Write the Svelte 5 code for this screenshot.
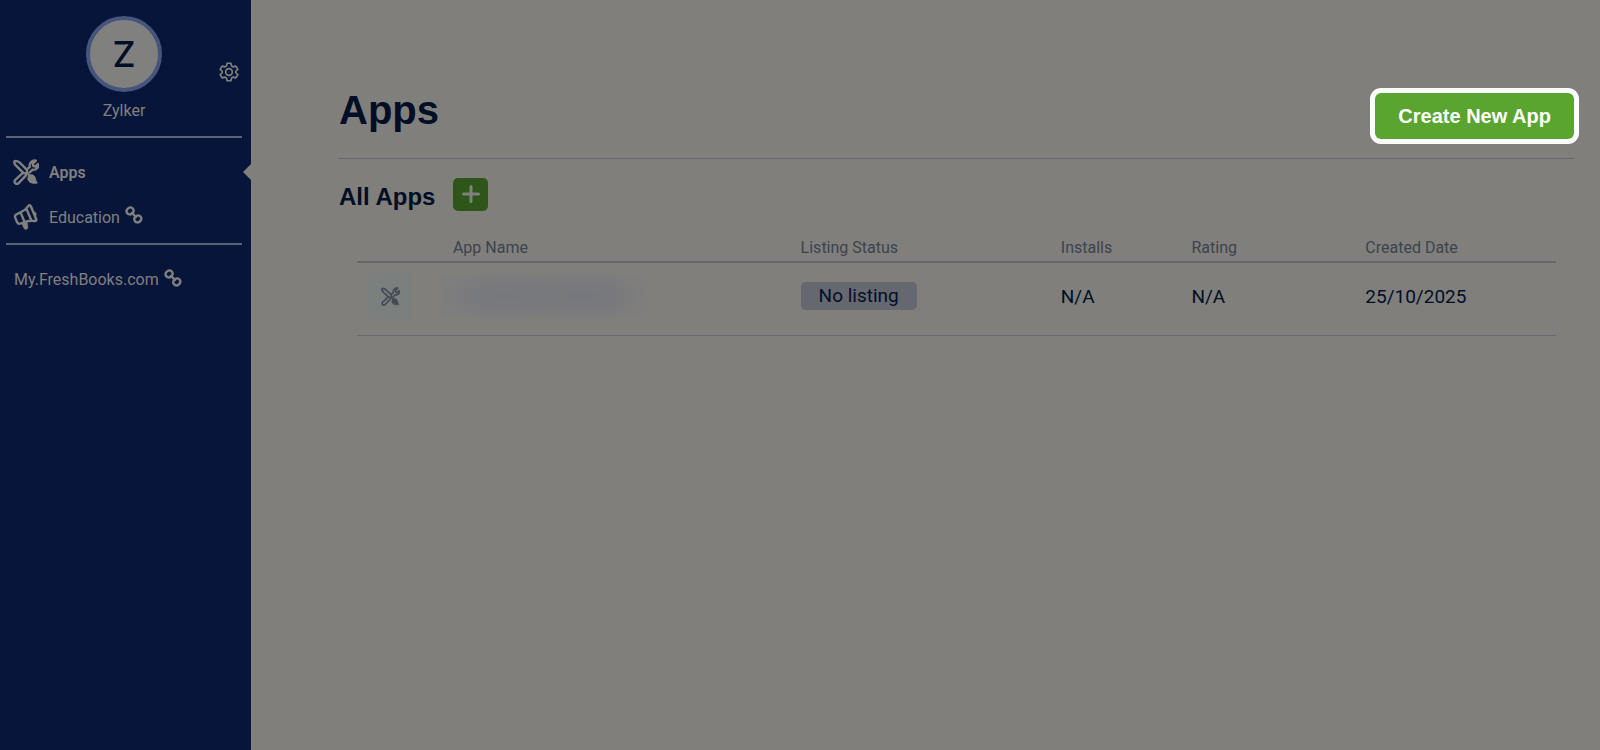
<script lang="ts">
  type App = {
    id: number;
    status: string;
    installs: string;
    rating: string;
    created: string;
  };

  const company = 'Zylker';

  let apps: App[] = $state([
    { id: 1, status: 'No listing', installs: 'N/A', rating: 'N/A', created: '25/10/2025' },
  ]);
</script>

{#snippet toolsIcon()}
  <svg class="tools" viewBox="0 0 26 26" aria-hidden="true">
    <path d="M10.5 14.2 2.6 6.2C1.2 4.600 1 2.600 1.600 2.200s3.400-.4 5.400 1.600l6 6c1.200 1.300 1.300 2.800 1.300 4.200z" />
    <path d="M14.300 14 17.200 16.800" />
    <path d="M10 13.600 2.300 20.800c-2.300 2.300 1 5.600 3.300 3.300l7.600-8M14.200 10.200l2.600-2.400c-.8-3.600 2.200-7 6-6.200l-3 3.200.5 2.200 2.300.5 2.300-2.300c.8 3.400-1.900 6.300-5.500 5.600L17 13.100" />
    <path class="fill" d="M15.800 17c1.500-1.600 4-1.500 5.300-.1 1.800 1.800 1 4.600 3.300 7.100-3.200.6-6.400.4-8.400-1.600-1.600-1.600-1.500-4-.2-5.400z" />
  </svg>
{/snippet}

{#snippet linkIcon()}
  <svg class="link-icon" viewBox="0 0 18 18" aria-hidden="true">
    <rect x="1.500" y="1.700" width="7.200" height="6.400" rx="3" transform="rotate(-40 5.100 4.900)" />
    <rect x="9.200" y="9.700" width="7.200" height="6.400" rx="3" transform="rotate(-40 12.800 12.900)" />
    <path d="m7 6.900 4 4.100" />
  </svg>
{/snippet}

<div class="layout">
  <aside class="sidebar">
    <header class="account">
      <div class="avatar">{company[0]}</div>
      <div class="company">{company}</div>
      <button class="settings" aria-label="Settings">
        <svg viewBox="0 0 24 24" aria-hidden="true">
          <circle cx="12" cy="12" r="4" />
          <path d="M9.700 1.500h4.600l.8 3.200 2 1.200 3.200-1 2.300 4-2.400 2.200v1.800l2.400 2.200-2.300 4-3.200-1-2 1.200-.8 3.200H9.700l-.8-3.200-2-1.200-3.200 1-2.300-4 2.400-2.200v-1.800L1.400 8.900l2.300-4 3.200 1 2-1.200z" />
        </svg>
      </button>
    </header>

    <nav class="menu">
      <a class="item active" href="#apps">
        {@render toolsIcon()}
        <span>Apps</span>
      </a>
      <a class="item" href="#education">
        <svg class="megaphone" viewBox="0 0 26 26" aria-hidden="true">
          <path d="M3.200 10.500 8 8.200c3-1.500 5.500-3.400 7.500-6.400.5-.8 1.800-.6 2.200.2l5.600 13.300c.4.900-.3 1.800-1.300 1.700-3.600-.6-7-.2-10.200 1l-4 1.500c-1.600.6-3.100 0-3.800-1.600l-1.700-4c-.6-1.500-.2-2.800.9-3.400zM7.600 8.600l4 9.400M13.500 5l5 11.700M20.500 8.800c1.800.2 2.400 1.600 1.300 2.900" />
          <path class="fill" d="m9.300 19.200 4.400-1.500 1 5.100c.6 2.600-3 3.400-3.800 1.200z" />
        </svg>
        <span>Education</span>
        {@render linkIcon()}
      </a>
    </nav>

    <a class="external" href="#my">
      <span>My.FreshBooks.com</span>
      {@render linkIcon()}
    </a>
  </aside>

  <main class="content">
    <header class="page-head">
      <h1>Apps</h1>
      <button class="create">Create New App</button>
    </header>

    <div class="section-head">
      <h2>All Apps</h2>
      <button class="add" aria-label="Add app">
        <svg viewBox="0 0 18 18" aria-hidden="true"><path d="M9 1.500v15M1.500 9h15" /></svg>
      </button>
    </div>

    <div class="table-wrap">
      <table>
        <colgroup>
          <col class="c-icon" />
          <col class="c-name" />
          <col class="c-status" />
          <col class="c-installs" />
          <col class="c-rating" />
          <col />
        </colgroup>
        <thead>
          <tr>
            <th></th>
            <th>App Name</th>
            <th>Listing Status</th>
            <th>Installs</th>
            <th>Rating</th>
            <th>Created Date</th>
          </tr>
        </thead>
        <tbody>
          {#each apps as app (app.id)}
            <tr>
              <td><div class="app-icon">{@render toolsIcon()}</div></td>
              <td><div class="redacted"></div></td>
              <td><span class="badge">{app.status}</span></td>
              <td>{app.installs}</td>
              <td>{app.rating}</td>
              <td>{app.created}</td>
            </tr>
          {/each}
        </tbody>
      </table>
    </div>
  </main>
</div>

<style>
  :global(body) {
    margin: 0;
    background: #807f7c;
  }
  .layout {
    display: flex;
    min-height: 100vh;
    font-family: 'Roboto', 'Noto Sans', sans-serif;
    font-size: 16px;
    color: #020e26;
  }
  button {
    border: none;
    padding: 0;
    cursor: pointer;
  }
  svg {
    flex: none;
    fill: none;
    stroke: currentColor;
    stroke-width: 2;
    stroke-linecap: round;
    stroke-linejoin: round;
  }
  .tools,
  .megaphone,
  .link-icon {
    stroke-width: 2.4;
  }
  .fill {
    fill: currentColor;
    stroke-width: 1;
  }

  .sidebar {
    box-sizing: border-box;
    flex: none;
    width: 251px;
    padding: 16px 9px 0 6px;
    background: #07153a;
    color: #80807f;
  }
  .account {
    position: relative;
    display: flex;
    flex-direction: column;
    align-items: center;
    height: 120px;
    border-bottom: 2px solid #5c6274;
  }
  .avatar {
    box-sizing: border-box;
    display: flex;
    align-items: center;
    justify-content: center;
    width: 76px;
    height: 76px;
    border: 4px solid #47547b;
    border-radius: 50%;
    background: #80807f;
    color: #020e26;
    font-family: 'Inter', sans-serif;
    font-size: 36px;
    font-weight: 500;
  }
  .company {
    margin-top: 9px;
    line-height: 20px;
  }
  .settings {
    position: absolute;
    top: 46px;
    right: 3px;
    display: flex;
    background: none;
    color: inherit;
  }
  .settings svg {
    width: 20px;
    height: 20px;
  }
  .menu {
    padding: 14px 0 6px;
    border-bottom: 2px solid #5c6274;
  }
  .item {
    position: relative;
    display: flex;
    align-items: center;
    gap: 10px;
    height: 40px;
    padding-left: 7px;
    color: inherit;
    text-decoration: none;
  }
  .item + .item {
    margin-top: 5px;
  }
  .item svg {
    width: 26px;
    height: 26px;
  }
  .item.active {
    font-weight: 600;
  }
  /* notch pointing at the current page */
  .item.active::after {
    content: '';
    position: absolute;
    right: -9px;
    border: 8px solid transparent;
    border-left: none;
    border-right-color: #807f7c;
  }
  .item .link-icon,
  .external .link-icon {
    width: 18px;
    height: 18px;
    margin: 0 0 4px -5px;
  }
  .external {
    display: flex;
    align-items: center;
    gap: 10px;
    padding: 24px 0 0 8px;
    line-height: 22px;
    color: inherit;
    text-decoration: none;
  }

  .content {
    flex: 1;
    padding: 80px 26px 0 88px;
  }
  .page-head {
    display: flex;
    align-items: center;
    justify-content: space-between;
    height: 78px;
    border-bottom: 1px solid #66676f;
  }
  h1,
  h2 {
    margin: 0;
    font-family: 'Liberation Sans', Arial, sans-serif;
    font-weight: 700;
  }
  h1 {
    padding-bottom: 18px;
    font-size: 40px;
    line-height: 48px;
  }
  h2 {
    font-size: 24px;
    line-height: 32px;
  }
  .create {
    height: 46px;
    padding: 0 23px;
    margin-bottom: 6px;
    border-radius: 6px;
    background: #5aa530;
    box-shadow: 0 0 0 5px #fff;
    color: #fff;
    font-family: 'Liberation Sans', Arial, sans-serif;
    font-size: 20px;
    font-weight: 700;
  }
  .section-head {
    display: flex;
    align-items: center;
    gap: 18px;
    padding-top: 16px;
  }
  .section-head h2 {
    padding-top: 6px;
  }
  .add {
    display: flex;
    align-items: center;
    justify-content: center;
    width: 35px;
    height: 33px;
    border-radius: 5px;
    background: #2d5618;
    color: #80807f;
  }
  .add svg {
    width: 18px;
    height: 18px;
    stroke-width: 3;
  }

  .table-wrap {
    padding: 18px 18px 0;
  }
  table {
    width: 100%;
    table-layout: fixed;
    border-collapse: collapse;
  }
  .c-icon { width: 8%; }
  .c-name { width: 29%; }
  .c-status { width: 21.7%; }
  .c-installs { width: 10.9%; }
  .c-rating { width: 14.5%; }
  th {
    height: 26px;
    padding: 4px 0 0;
    border-bottom: 2px solid #66676f;
    color: #3c434f;
    font-weight: 400;
    line-height: 20px;
    text-align: left;
  }
  td {
    height: 66px;
    padding: 0 0 6px;
    border-bottom: 1px solid #66676f;
    font-size: 19px;
  }
  .app-icon {
    display: flex;
    align-items: center;
    justify-content: center;
    width: 46px;
    height: 46px;
    margin-left: 10px;
    border-radius: 5px;
    background: #7b7f7d;
    color: #424b55;
  }
  .app-icon svg {
    width: 19px;
    height: 19px;
  }
  .redacted {
    width: 214px;
    height: 42px;
    margin-left: -12px;
    background:
      radial-gradient(closest-side, #77787e, #77787e00) 0 0 / 130px 42px no-repeat,
      radial-gradient(closest-side, #76777e, #76777e00) 76px 0 / 130px 42px no-repeat,
      linear-gradient(90deg, #7e7e7d, #7c7c7d 20%, #7c7c7d 80%, #807f7c);
  }
  .badge {
    display: inline-block;
    padding: 0 18px;
    border-radius: 5px;
    background: #66686f;
    line-height: 28px;
  }
</style>
